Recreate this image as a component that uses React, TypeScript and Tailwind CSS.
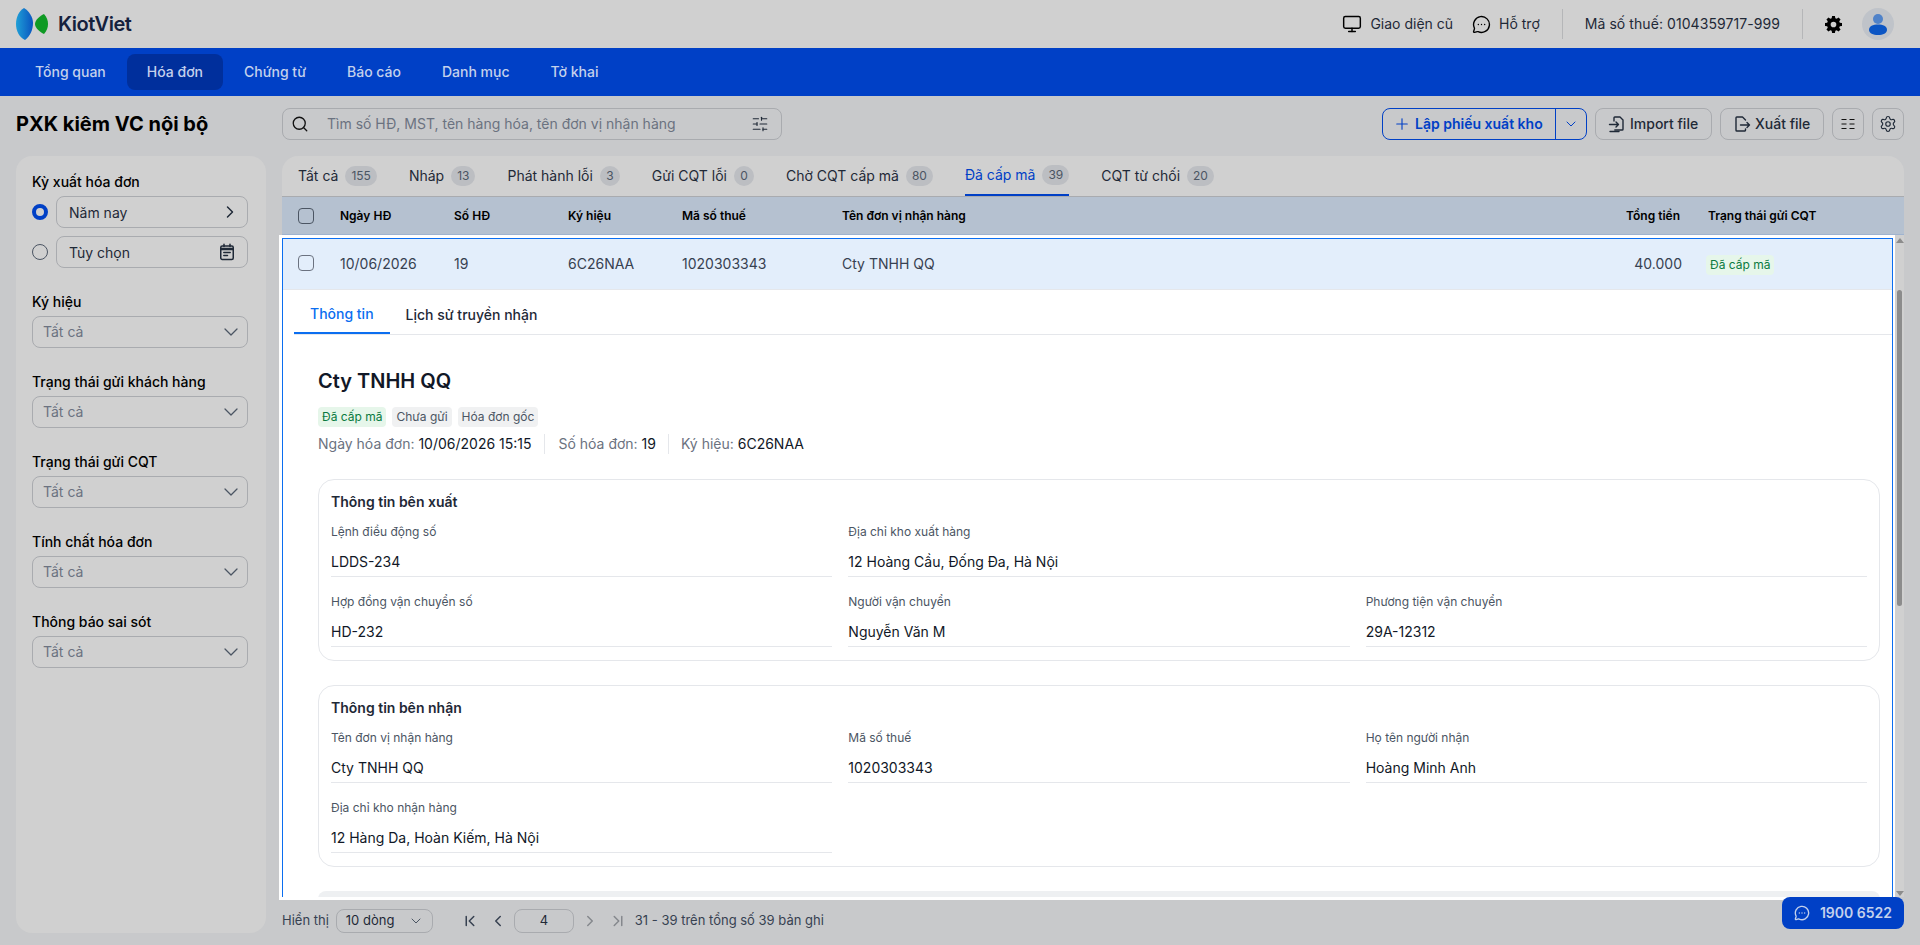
import {
  ChevronDown,
  ChevronFirst,
  ChevronLast,
  ChevronLeft,
  ChevronRight,
  MessageCircleMore,
  Monitor,
  Plus,
  Search,
  Settings,
  SlidersHorizontal,
} from "lucide-react";

const navItems = ["Tổng quan", "Hóa đơn", "Chứng từ", "Báo cáo", "Danh mục", "Tờ khai"];

const statusTabs = [
  { label: "Tất cả", count: 155 },
  { label: "Nháp", count: 13 },
  { label: "Phát hành lỗi", count: 3 },
  { label: "Gửi CQT lỗi", count: 0 },
  { label: "Chờ CQT cấp mã", count: 80 },
  { label: "Đã cấp mã", count: 39, active: true },
  { label: "CQT từ chối", count: 20 },
];

const filters = ["Ký hiệu", "Trạng thái gửi khách hàng", "Trạng thái gửi CQT", "Tính chất hóa đơn", "Thông báo sai sót"];

function Logo() {
  return (
    <svg width="34" height="32" viewBox="0 0 34 32" className="shrink-0">
      <defs>
        <linearGradient id="kv-blue" x1="0" y1="0" x2="1" y2="0">
          <stop offset="0" stopColor="#1f9fd6" />
          <stop offset="1" stopColor="#0a55c0" />
        </linearGradient>
      </defs>
      <path d="M8 0C13 3 17 9 17 15C17 22 14 28 9 32C3 29 0 23 0 16C0 9 3 3 8 0Z" fill="url(#kv-blue)" />
      <path d="M28 6C31 9 32 13 32 16C32 19 31 23 28 26C24 24 19 20 19 16C19 12 24 8 28 6Z" fill="#0f9a24" />
    </svg>
  );
}

function Avatar() {
  return (
    <div className="flex h-8 w-8 items-center justify-center rounded-full bg-[#bfc3c9]">
      <svg width="18" height="22" viewBox="0 0 18 22">
        <circle cx="9" cy="6" r="5" fill="#4f82c9" />
        <path d="M0 17C0 13 4 11.5 9 11.5C14 11.5 18 13 18 17C18 20 14 22 9 22C4 22 0 20 0 17Z" fill="#0b55c4" />
      </svg>
    </div>
  );
}

function GearSolid() {
  return (
    <svg width="17" height="17" viewBox="0 0 24 24" fill="#000">
      <path
        fillRule="evenodd"
        d="M10 1h4l.6 3.1 1.9.8L19.1 3 22 5.9l-1.9 2.6.8 1.9L24 11v4l-3.1.6-.8 1.9 1.9 2.6L19.1 23l-2.6-1.9-1.9.8L14 25h-4l-.6-3.1-1.9-.8L4.9 23 2 20.1l1.9-2.6-.8-1.9L0 15v-4l3.1-.6.8-1.9L2 5.9 4.9 3l2.6 1.9 1.9-.8L10 1Zm2 8a4 4 0 1 0 0 8 4 4 0 0 0 0-8Z"
        transform="translate(0 -1)"
      />
    </svg>
  );
}

function ColumnsIcon() {
  return (
    <svg width="16" height="16" viewBox="0 0 16 16" stroke="#111" strokeWidth="1.2" fill="none">
      <path d="M1.5 3.5h5M9.5 3.5h5M1.5 8h5M9.5 8h5M1.5 12.5h5M9.5 12.5h5" />
    </svg>
  );
}

function ImportIcon() {
  return (
    <svg width="18" height="18" viewBox="0 0 18 18" fill="none" stroke="#1f2937" strokeWidth="1.4" strokeLinecap="round" strokeLinejoin="round">
      <path d="M6 6V2.8a.8.8 0 0 1 .8-.8H12l3 3v9.2a.8.8 0 0 1-.8.8H6.8" />
      <path d="M1.5 9.5h9M8 7l2.5 2.5L8 12" />
      <path d="M2 16.5h9" />
    </svg>
  );
}

function ExportIcon() {
  return (
    <svg width="18" height="18" viewBox="0 0 18 18" fill="none" stroke="#1f2937" strokeWidth="1.4" strokeLinecap="round" strokeLinejoin="round">
      <path d="M12.5 5 9.5 2H3.8a.8.8 0 0 0-.8.8v12.4a.8.8 0 0 0 .8.8h8a.8.8 0 0 0 .7-.8V14" />
      <path d="M7.5 10h9M14 7.5l2.5 2.5-2.5 2.5" />
    </svg>
  );
}

function CalendarIcon() {
  return (
    <svg width="16" height="18" viewBox="0 0 16 18" fill="none" stroke="#1f2937" strokeWidth="1.5" strokeLinecap="round">
      <rect x="1.75" y="3" width="12.5" height="13.5" rx="1.5" />
      <path d="M2 6h12" strokeWidth="2.5" strokeLinecap="butt" />
      <path d="M5 1.2v2.3M11 1.2v2.3M4.8 9.5h6.4M4.8 12.5h3.7" />
    </svg>
  );
}

function Checkbox() {
  return <span className="block h-4 w-4 rounded-[4px] border border-[#4b5563]" />;
}

function Select({ value }: { value: string }) {
  return (
    <div className="flex h-8 items-center justify-between rounded-lg border border-[#a9abaf] pl-[10px] pr-1 text-sm text-[#6b7280]">
      <span>{value}</span>
      <ChevronDown size={24} strokeWidth={1.25} className="text-[#4b5563]" />
    </div>
  );
}

function Field({ label, value }: { label: string; value: string }) {
  return (
    <div>
      <div className="h-[18px] text-xs leading-[18px] text-[#4b5563]">{label}</div>
      <div className="mt-[11px] h-[25px] border-b border-[#e5e7eb] text-sm leading-[20px] text-[#111827]">{value}</div>
    </div>
  );
}

function InfoCard({ title, fields }: { title: string; fields: { label: string; value: string; span?: boolean }[] }) {
  return (
    <div className="h-[182px] rounded-2xl border border-[#e5e7eb] px-[12px] pt-[12px]">
      <div className="h-5 text-sm font-semibold leading-5 text-[#1f2937]">{title}</div>
      <div className="mt-[11px] grid grid-cols-3 gap-x-4 gap-y-[16px]">
        {fields.map((f) => (
          <div key={f.label} className={f.span ? "col-span-2" : ""}>
            <Field label={f.label} value={f.value} />
          </div>
        ))}
      </div>
    </div>
  );
}

function Sidebar() {
  return (
    <aside className="mb-3 mt-4 flex-1 rounded-2xl bg-[#d0d0d0] pl-4 pr-[18px] pt-[16px]">
      <div className="h-5 text-sm font-medium leading-5 text-black">Kỳ xuất hóa đơn</div>
      <div className="mt-[4px] flex items-center gap-2">
        <span className="h-4 w-4 shrink-0 rounded-full border-[4px] border-[#0040c6]" />
        <div className="flex h-8 flex-1 items-center justify-between rounded-lg border border-[#a9abaf] pl-[12px] pr-[7px] text-sm text-[#1f2937]">
          <span className="pt-px">Năm nay</span>
          <ChevronRight size={20} strokeWidth={1.75} />
        </div>
      </div>
      <div className="mt-2 flex items-center gap-2">
        <span className="h-4 w-4 shrink-0 rounded-full border border-[#4b5563]" />
        <div className="flex h-8 flex-1 items-center justify-between rounded-lg border border-[#a9abaf] pl-[12px] pr-[12px] text-sm text-[#1f2937]">
          <span className="pt-px">Tùy chọn</span>
          <CalendarIcon />
        </div>
      </div>
      {filters.map((label) => (
        <div key={label} className="mt-6">
          <div className="h-5 text-sm font-medium leading-5 text-black">{label}</div>
          <div className="mt-[4px]">
            <Select value="Tất cả" />
          </div>
        </div>
      ))}
    </aside>
  );
}

function Toolbar() {
  const btn = "flex h-8 items-center rounded-lg border border-[#a9abaf] text-sm font-medium text-[#1f2937]";
  return (
    <div className="flex h-8 items-center justify-between">
      <div className="flex h-8 w-[500px] items-center rounded-lg border border-[#a9abaf] pl-2 pr-[12px] text-sm text-[#6b7280]">
        <Search size={18} strokeWidth={1.75} className="text-[#111]" />
        <span className="ml-[18px] flex-1">Tìm số HĐ, MST, tên hàng hóa, tên đơn vị nhận hàng</span>
        <SlidersHorizontal size={18} strokeWidth={1.5} className="text-[#1f2937]" />
      </div>
      <div className="flex items-center gap-2">
        <div className="flex h-8 w-[205px] items-center rounded-lg border border-[#0040c6] text-sm font-semibold text-[#0040c6]">
          <div className="flex flex-1 items-center gap-[4px] pl-[10px]">
            <Plus size={18} strokeWidth={1.5} />
            <span>Lập phiếu xuất kho</span>
          </div>
          <div className="flex h-full w-[31px] items-center justify-center border-l border-[#0040c6]">
            <ChevronDown size={16} strokeWidth={1.5} />
          </div>
        </div>
        <div className={`${btn} w-[117px] gap-[4px] pl-[12px]`}>
          <ImportIcon />
          <span>Import file</span>
        </div>
        <div className={`${btn} w-[104px] gap-[4px] pl-[12px]`}>
          <ExportIcon />
          <span>Xuất file</span>
        </div>
        <div className={`${btn} w-8 justify-center`}>
          <ColumnsIcon />
        </div>
        <div className={`${btn} w-8 justify-center`}>
          <Settings size={18} strokeWidth={1.5} />
        </div>
      </div>
    </div>
  );
}

function DetailPanel() {
  return (
    <div className="min-h-0 flex-1 overflow-hidden pl-[35px] pr-[12px] pt-[28px]">
      <h2 className="h-[36px] text-xl font-semibold leading-[36px] text-[#111827]">Cty TNHH QQ</h2>
      <div className="mt-[8px] flex h-5 gap-[6px] text-xs leading-5">
        <span className="rounded bg-[#e6f6ea] px-1 text-[#0a7a3f]">Đã cấp mã</span>
        <span className="rounded bg-[#f0f1f2] px-1 text-[#4b5563]">Chưa gửi</span>
        <span className="rounded bg-[#f0f1f2] px-1 text-[#4b5563]">Hóa đơn gốc</span>
      </div>
      <div className="mt-[7px] flex h-5 items-center text-sm leading-5 text-[#6b7280]">
        <span>
          Ngày hóa đơn: <span className="text-[#111827]">10/06/2026 15:15</span>
        </span>
        <span className="mx-[13px] h-5 w-px bg-[#e5e7eb]" />
        <span>
          Số hóa đơn: <span className="text-[#111827]">19</span>
        </span>
        <span className="mx-3 h-5 w-px bg-[#e5e7eb]" />
        <span>
          Ký hiệu: <span className="text-[#111827]">6C26NAA</span>
        </span>
      </div>
      <div className="mt-[25px]">
        <InfoCard
          title="Thông tin bên xuất"
          fields={[
            { label: "Lệnh điều động số", value: "LDDS-234" },
            { label: "Địa chỉ kho xuất hàng", value: "12 Hoàng Cầu, Đống Đa, Hà Nội", span: true },
            { label: "Hợp đồng vận chuyển số", value: "HD-232" },
            { label: "Người vận chuyển", value: "Nguyễn Văn M" },
            { label: "Phương tiện vận chuyển", value: "29A-12312" },
          ]}
        />
      </div>
      <div className="mt-6">
        <InfoCard
          title="Thông tin bên nhận"
          fields={[
            { label: "Tên đơn vị nhận hàng", value: "Cty TNHH QQ" },
            { label: "Mã số thuế", value: "1020303343" },
            { label: "Họ tên người nhận", value: "Hoàng Minh Anh" },
            { label: "Địa chỉ kho nhận hàng", value: "12 Hàng Da, Hoàn Kiếm, Hà Nội" },
          ]}
        />
      </div>
      <div className="mt-6 h-10 rounded-t-lg bg-[#eef0f2]" />
    </div>
  );
}

function InvoiceTable() {
  return (
    <div className="flex min-h-0 flex-1 flex-col rounded-t-2xl bg-[#d0d0d0]">
      <div className="flex h-[41px] shrink-0 items-end border-b border-[#a9abaf]">
        {statusTabs.map((t) => (
          <div
            key={t.label}
            className={`mx-4 flex h-[40px] items-center gap-[7px] text-sm ${
              t.active ? "border-b-2 border-[#0040c6] text-[#0040c6]" : "text-[#1f2937]"
            }`}
          >
            <span>{t.label}</span>
            <span className="flex h-5 min-w-5 items-center justify-center rounded-full bg-[#bcbec2] px-[6px] text-xs text-[#4b5563]">
              {t.count}
            </span>
          </div>
        ))}
      </div>
      <div className="flex h-[38px] shrink-0 items-center border-b border-[#9fb3cf] bg-[#b5c1d0] text-xs font-semibold text-black">
        <div className="w-[58px] shrink-0 pl-4">
          <Checkbox />
        </div>
        <div className="w-[114px] shrink-0">Ngày HĐ</div>
        <div className="w-[114px] shrink-0">Số HĐ</div>
        <div className="w-[114px] shrink-0">Ký hiệu</div>
        <div className="w-[160px] shrink-0">Mã số thuế</div>
        <div className="flex-1">Tên đơn vị nhận hàng</div>
        <div className="w-[128px] shrink-0 pr-[28px] text-right">Tổng tiền</div>
        <div className="w-[196px] shrink-0">Trạng thái gửi CQT</div>
      </div>
      <div className="flex min-h-0 flex-1">
        <div className="flex min-w-0 flex-1 flex-col pt-[3px]">
          <div className="flex min-h-0 flex-1 flex-col border border-b-0 border-[#0b6ef0] bg-white shadow-[0_0_0_3px_#fff]">
            <div className="flex h-[51px] shrink-0 items-center border-b border-[#e5e7eb] bg-[#e3eefb] text-sm text-[#374151]">
              <div className="mb-[2px] w-[57px] shrink-0 pl-[15px]">
                <span className="block h-4 w-4 rounded-[4px] border border-[#6b7280]" />
              </div>
              <div className="w-[114px] shrink-0">10/06/2026</div>
              <div className="w-[114px] shrink-0">19</div>
              <div className="w-[114px] shrink-0">6C26NAA</div>
              <div className="w-[160px] shrink-0">1020303343</div>
              <div className="flex-1">Cty TNHH QQ</div>
              <div className="w-[124px] shrink-0 pr-[24px] text-right">40.000</div>
              <div className="w-[186px] shrink-0">
                <span className="inline-block h-5 rounded bg-[#e6f6ea] px-1 text-xs leading-5 text-[#0a7a3f]">
                  Đã cấp mã
                </span>
              </div>
            </div>
            <div className="ml-[11px] flex h-[45px] shrink-0 border-b border-[#e5e7eb] text-sm font-medium">
              <div className="flex items-center border-b-2 border-[#0b6ef0] px-4 pt-[5px] text-[#0b6ef0]">Thông tin</div>
              <div className="flex items-center px-4 pt-[5px] text-[#1f2937]">Lịch sử truyền nhận</div>
            </div>
            <DetailPanel />
          </div>
        </div>
        <div className="ml-[2px] flex h-full w-[9px] shrink-0 flex-col items-center bg-[#d0d0d0]">
          <span className="mt-[3px] h-0 w-0 border-x-[4px] border-b-[5px] border-x-transparent border-b-[#8c8c8c]" />
          <span className="mt-[47px] h-[316px] w-[5px] rounded-full bg-[#8c8c8c]" />
          <span className="mb-[1px] mt-auto h-0 w-0 border-x-[4px] border-t-[5px] border-x-transparent border-t-[#8c8c8c]" />
        </div>
      </div>
    </div>
  );
}

function Pagination() {
  return (
    <div className="flex h-12 shrink-0 items-center text-[13px] text-[#374151]">
      <span>Hiển thị</span>
      <div className="ml-[7px] flex h-6 w-[97px] items-center justify-between rounded-lg border border-[#a9abaf] pl-[9px] pr-2 text-[13px] text-[#1f2937]">
        <span>10 dòng</span>
        <ChevronDown size={16} strokeWidth={1.5} className="text-[#4b5563]" />
      </div>
      <ChevronFirst size={18} strokeWidth={2} className="ml-[28px] text-[#374151]" />
      <ChevronLeft size={18} strokeWidth={2} className="ml-[10px] text-[#374151]" />
      <div className="ml-[7px] flex h-6 w-[60px] items-center justify-center rounded-lg border border-[#a9abaf] text-[13px] text-[#1f2937]">
        4
      </div>
      <ChevronRight size={18} strokeWidth={2} className="ml-[7px] text-[#85888d]" />
      <ChevronLast size={18} strokeWidth={2} className="ml-[10px] text-[#85888d]" />
      <span className="ml-[8px]">31 - 39 trên tổng số 39 bản ghi</span>
    </div>
  );
}

export default function App() {
  return (
    <div className="relative flex h-[945px] flex-col overflow-hidden bg-[#c8c9cb] font-['Inter',sans-serif]">
      <header className="flex h-12 shrink-0 items-center bg-[#d0d0d0] pl-4 pr-[26px]">
        <Logo />
        <span className="ml-2 text-xl font-semibold tracking-tight text-[#14213d]">KiotViet</span>
        <div className="ml-auto flex items-center text-sm text-[#1f2937]">
          <Monitor size={20} strokeWidth={1.75} className="text-black" />
          <span className="ml-[8px]">Giao diện cũ</span>
          <MessageCircleMore size={19} strokeWidth={1.75} className="ml-[19px] text-black" />
          <span className="ml-[8px]">Hỗ trợ</span>
          <span className="mx-[22px] h-[30px] w-px bg-[#b5b6b8]" />
          <span className="tracking-[0.005em]">Mã số thuế: 0104359717-999</span>
          <span className="mx-[22px] h-[30px] w-px bg-[#b5b6b8]" />
          <GearSolid />
          <span className="ml-5">
            <Avatar />
          </span>
        </div>
      </header>
      <nav className="flex h-12 shrink-0 items-center gap-px bg-[#0040c6] pl-[15px]">
        {navItems.map((item) => (
          <div
            key={item}
            className={`flex h-9 items-center rounded-lg px-5 text-sm font-medium text-[#c4d1ec] ${
              item === "Hóa đơn" ? "bg-[#002f9c]" : ""
            }`}
          >
            {item}
          </div>
        ))}
      </nav>
      <div className="flex min-h-0 flex-1 gap-4 px-4 pt-3">
        <div className="flex w-[250px] shrink-0 flex-col">
          <h1 className="h-8 text-xl font-bold leading-8 text-black">PXK kiêm VC nội bộ</h1>
          <Sidebar />
        </div>
        <div className="flex min-w-0 flex-1 flex-col">
          <Toolbar />
          <div className="mt-4 flex min-h-0 flex-1 flex-col">
            <InvoiceTable />
          </div>
          <Pagination />
        </div>
      </div>
      <div className="absolute left-[1782px] top-[897px] flex h-8 w-[122px] items-center justify-center gap-[10px] rounded-lg bg-[#0040c6] text-sm font-semibold text-[#c4d1ec]">
        <MessageCircleMore size={16} strokeWidth={2} />
        <span>1900 6522</span>
      </div>
    </div>
  );
}
